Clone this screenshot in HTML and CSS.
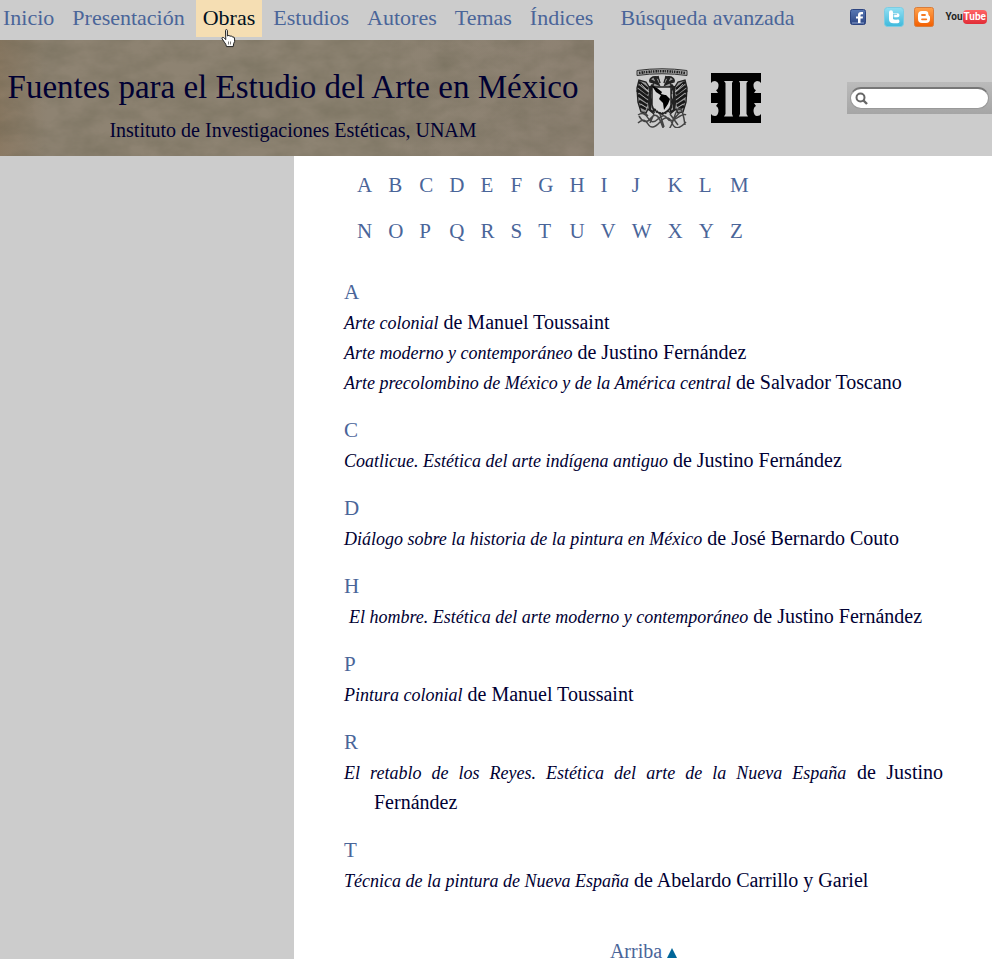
FILE: index.html
```html
<!DOCTYPE html>
<html lang="es">
<head>
<meta charset="utf-8">
<title>Fuentes para el Estudio del Arte en México</title>
<link rel="stylesheet" href="styles.css">
</head>
<body>
<header class="top">
  <div class="bar">
    <nav class="menu" aria-label="Principal">
      <a href="#">Inicio</a>
      <a href="#">Presentación</a>
      <a href="#" class="current">Obras<svg class="pointer" viewBox="0 0 15 19" aria-hidden="true"><path d="M4.5 1.5Q4.5 .6 5.4 .6T6.4 1.5V7Q8.2 5.6 9 7.2Q10.8 6.2 11.4 8Q13.6 7.3 13.6 10V12.5Q12.5 14 12.2 17.6H5.5Q5 15 3.4 13.2L1.2 10Q.4 8.8 1.4 8.4Q2.6 8 3.6 9.6L4.8 10.6Z" fill="#fff" stroke="#222" stroke-width="1"/><path d="M7.5 12.5V15.5M9.5 12.5V15.5" stroke="#555" stroke-width=".8"/></svg></a>
      <a href="#">Estudios</a>
      <a href="#">Autores</a>
      <a href="#">Temas</a>
      <a href="#">Índices</a>
      <a href="#" class="advanced">Búsqueda avanzada</a>
    </nav>
    <div class="social">
      <a href="#" aria-label="Facebook"><svg width="16" height="16" viewBox="0 0 16 16"><defs><linearGradient id="fb" x2="0" y2="1"><stop stop-color="#5878b4"/><stop offset="1" stop-color="#2c4582"/></linearGradient></defs><rect x=".5" y=".5" width="15" height="15" rx="2" fill="url(#fb)" stroke="#2c4480"/><rect x="2" y="13.5" width="12" height="1" fill="#8ba2d0"/><path d="M8 14V9.5H6V7.4H8V6Q8 3 11 3H13V5.2H11.6Q10.5 5.2 10.5 6.3V7.4H13L12.7 9.5H10.5V14Z" fill="#fff"/></svg></a>
      <a href="#" aria-label="Twitter"><svg width="20" height="20" viewBox="0 0 20 20"><defs><linearGradient id="tw" x2="0" y2="1"><stop stop-color="#93dff2"/><stop offset="1" stop-color="#3eb9dc"/></linearGradient></defs><rect x=".5" y=".5" width="19" height="19" rx="3" fill="url(#tw)" stroke="#7ccce2"/><path d="M7 5.2V12Q7 14.3 9.5 14.3H13.5M7 8.3H13.5" fill="none" stroke="#fff" stroke-width="4" stroke-linecap="round"/><path d="M9.7 7.3V11Q9.7 12.2 11 12.2H13.5M9 7.3H13" fill="none" stroke="#55bfe0" stroke-width="0.8"/></svg></a>
      <a href="#" aria-label="Blogger"><svg width="20" height="20" viewBox="0 0 20 20"><defs><linearGradient id="bl" x2="0" y2="1"><stop stop-color="#ffa24d"/><stop offset="1" stop-color="#f35e00"/></linearGradient></defs><rect x=".5" y=".5" width="19" height="19" rx="2" fill="url(#bl)" stroke="#d77c3c"/><path d="M8 4H11.5Q14.3 4 14.3 6.8Q14.3 8.5 15.2 8.7Q16 9 16 10V12Q16 16 12 16H8Q4 16 4 12V8Q4 4 8 4Z" fill="#fff"/><path d="M8 8H11M8 12.3H12.3" stroke="#f67a22" stroke-width="1.8" stroke-linecap="round"/></svg></a>
      <a href="#" class="youtube" aria-label="YouTube"><span>You</span><span class="tube">Tube</span></a>
    </div>
  </div>
  <div class="masthead">
    <div class="banner">
      <svg class="paper" aria-hidden="true"><filter id="grain" x="0" y="0" width="100%" height="100%" color-interpolation-filters="sRGB"><feTurbulence type="fractalNoise" baseFrequency=".03 .05" numOctaves="5" seed="8"/><feColorMatrix values="0 0 0 0 .35  0 0 0 0 .34  0 0 0 0 .26  .5 0 0 0 -.14"/></filter><rect width="100%" height="100%" filter="url(#grain)"/></svg>
      <h1>Fuentes para el Estudio del Arte en México</h1>
      <p>Instituto de Investigaciones Estéticas, UNAM</p>
    </div>
    <div class="logos">
      <a href="#" aria-label="UNAM"><svg width="52" height="60" viewBox="0 0 52 60">
        <path d="M1 7.500V2.500Q26 -1 51 2.500V7.500Q26 4 1 7.500Z" fill="#aaa" stroke="#333"/>
        <path d="M3 5Q26 1.500 49 5" fill="none" stroke="#222" stroke-width="2.600" stroke-dasharray="1.500 1 2 .7 1 .8"/>
        <g id="eagle"><path d="M24 15Q23 7 17 9Q13 11 14 14L18 15L15 20L19 25L15 33L18 44L14 42L12 32L15 22L10 14L3 12L1 20L2 34L5 44L10 45L12 41L18 46" fill="#999" stroke="#222" stroke-width="1.400"/>
        <path d="M3 14L12 21M2 18L12 26M1 22L12 30M2 27L12 34M3 33L11 38M4 38L10 41" stroke="#181818" stroke-width="2.800"/><path d="M15 17L19 20L17 25L22 28M15 33L19 35L17 39L21 42M14 12L22 16L19 10L23 9M14 18L14 42" fill="none" stroke="#222" stroke-width="2.500"/>
        <path d="M5 16L13 24M3 25L12 32M5 36L11 40" stroke="#ccc" stroke-width=".7"/></g>
        <use href="#eagle" transform="matrix(-1 0 0 1 52 0)"/>
        <path d="M16 19H35V37Q34 43 26 46Q17 43 16 37Z" fill="#d4d4d4" stroke="#222" stroke-width="1.500"/>
        <path d="M16 18L21 20L26 24L25 26L29 27L30 29L26 28L20 24ZM25 27L30 27L34 31L32 36L28 42L27 35L23 31Z" fill="#000"/>
        <path d="M18 41Q26 50 34 41" fill="none" stroke="#222" stroke-width="2.400" stroke-dasharray="2 1"/>
        <path d="M2 47Q8 43 12 50T22 51T31 50T41 50T50 47M2 55Q8 49 12 56T24 54T36 55T50 54M3 48Q9 58 15 50T26 57T38 50T49 57M8 44L12 48M44 44L38 51M24 46L28 59M18 46L14 55M34 46L42 57" fill="none" stroke="#444" stroke-width="1.500"/>
      </svg></a>
      <a href="#" aria-label="Instituto de Investigaciones Estéticas"><svg width="50" height="50" viewBox="0 0 50 50"><rect width="50" height="50" fill="#000"/><path d="M13 8H22L21 10V41L22 43.500H13L14.500 41V10ZM28 8H37L35.500 10V41L37 43.500H28L29 41V10ZM0 10Q1 8 4 8Q8 9 7.500 13Q7 17 5 17L7 20H0ZM0 30H7L5 33Q7.500 34 7.500 38Q7 43 4 43Q1 43 0 41ZM50 10Q49 8 46 8Q42 9 42.500 13Q43 17 45 17L43 20H50ZM50 30H43L45 33Q42.500 34 42.500 38Q43 43 46 43Q49 43 50 41Z" fill="#ccc"/></svg></a>
    </div>
    <form class="search">
      <svg width="14" height="14" viewBox="0 0 14 14" aria-hidden="true"><circle cx="5.500" cy="5.500" r="4" fill="none" stroke="#666" stroke-width="2"/><path d="M8.500 8.500L12 12" stroke="#666" stroke-width="2.400"/></svg>
      <input type="text" aria-label="Buscar">
    </form>
  </div>
</header>
<main class="content">
  <table class="letters">
    <tr><td><a href="#a">A</a></td><td><a href="#b">B</a></td><td><a href="#c">C</a></td><td><a href="#d">D</a></td><td><a href="#e">E</a></td><td><a href="#f">F</a></td><td><a href="#g">G</a></td><td><a href="#h">H</a></td><td><a href="#i">I</a></td><td><a href="#j">J</a></td><td><a href="#k">K</a></td><td><a href="#l">L</a></td><td><a href="#m">M</a></td></tr>
    <tr><td><a href="#n">N</a></td><td><a href="#o">O</a></td><td><a href="#p">P</a></td><td><a href="#q">Q</a></td><td><a href="#r">R</a></td><td><a href="#s">S</a></td><td><a href="#t">T</a></td><td><a href="#u">U</a></td><td><a href="#v">V</a></td><td><a href="#w">W</a></td><td><a href="#x">X</a></td><td><a href="#y">Y</a></td><td><a href="#z">Z</a></td></tr>
  </table>
  <section id="a"><h2>A</h2>
    <p><a href="#"><i>Arte colonial</i> de Manuel Toussaint</a></p>
    <p><a href="#"><i>Arte moderno y contemporáneo</i> de Justino Fernández</a></p>
    <p><a href="#"><i>Arte precolombino de México y de la América central</i> de Salvador Toscano</a></p>
  </section>
  <section id="c"><h2>C</h2>
    <p><a href="#"><i>Coatlicue. Estética del arte indígena antiguo</i> de Justino Fernández</a></p>
  </section>
  <section id="d"><h2>D</h2>
    <p><a href="#"><i>Diálogo sobre la historia de la pintura en México</i> de José Bernardo Couto</a></p>
  </section>
  <section id="h"><h2>H</h2>
    <p>&nbsp;<a href="#"><i>El hombre. Estética del arte moderno y contemporáneo</i> de Justino Fernández</a></p>
  </section>
  <section id="p"><h2>P</h2>
    <p><a href="#"><i>Pintura colonial</i> de Manuel Toussaint</a></p>
  </section>
  <section id="r"><h2>R</h2>
    <p><a href="#"><i>El retablo de los Reyes. Estética del arte de la Nueva España</i> de Justino Fernández</a></p>
  </section>
  <section id="t"><h2>T</h2>
    <p><a href="#"><i>Técnica de la pintura de Nueva España</i> de Abelardo Carrillo y Gariel</a></p>
  </section>
  <a class="to-top" href="#">Arriba <svg width="10" height="10" viewBox="0 0 10 10" aria-hidden="true"><path d="M5 0L10 10H0Z" fill="#069"/></svg></a>
</main>
</body>
</html>
```
FILE: styles.css
```css
* { box-sizing: border-box; }
body {
  margin: 0;
  min-height: 100vh;
  display: flex;
  flex-direction: column;
  background: #ccc;
  color: #003;
  font-family: "Liberation Serif", serif;
  font-size: 20px;
  line-height: 30px;
}
a { color: inherit; text-decoration: none; }
h1, h2, p { margin: 0; font-weight: normal; }
.bar { display: flex; justify-content: space-between; height: 40px; }
.menu { display: flex; gap: 4px; margin-left: -4px; color: #4a6599; font-size: 22px; white-space: nowrap; }
.menu a { position: relative; height: 37px; padding: 0 7px; line-height: 36px; }
.menu .current { background: #f5deb3; color: #012; }
.menu .advanced { margin-left: 9px; }
.pointer { position: absolute; left: 25px; top: 29px; width: 15px; height: 19px; z-index: 2; }
.social { display: flex; align-items: center; height: 34px; padding-right: 5px; }
.social svg { display: block; }
.social a + a { margin-left: 18px; }
.social a:nth-child(3) { margin-left: 10px; }
.social .youtube { display: flex; align-items: center; margin-left: 11px; font: bold 10px/14px Roboto, sans-serif; color: #222; }
.youtube .tube { padding: 0 1px; background: linear-gradient(#f66, #e12b35); color: #fff; border-radius: 4px; }
.masthead { display: flex; height: 116px; }
.banner { position: relative; width: 594px; padding: 29px 8px 0 0; text-align: center; background: linear-gradient(90deg, #8a7963, #8e8372 8%, #8d8372 60%, #8e8273); }
.banner h1, .banner p { position: relative; white-space: nowrap; }
.banner h1 { font-size: 33px; line-height: 36px; }
.banner p { margin-top: 10px; }
.paper { position: absolute; left: 0; top: 0; width: 100%; height: 100%; }
.logos { display: flex; align-items: center; gap: 23px; margin-left: 42px; }
.logos svg { display: block; }
.search { display: flex; align-items: center; align-self: center; width: 145px; height: 32px; margin-left: auto; padding: 3px; background: linear-gradient(#bbb, #a5a5a5); position: relative; }
.search svg { position: absolute; left: 8px; top: 10px; }
.search input { width: 100%; height: 22px; padding: 0 10px 0 24px; border: 1px solid #999; border-top: 2px solid #777; border-radius: 11px; background: #fff; font: inherit; font-size: 14px; }
.content { flex: 1; margin-left: 294px; padding: 6px 49px 0 50px; background: #fff; }
.letters { margin: 0 0 23px 5px; border-spacing: 0; color: #4a6599; font-size: 21px; }
.letters td { height: 46px; padding: 0 8px; }
h2 { color: #4a6599; font-size: 21px; }
section { margin-bottom: 18px; }
section p { padding-left: 30px; text-indent: -30px; text-align: justify; }
section i { font-size: 18px; line-height: 1; }
.to-top { display: block; margin-top: 47px; line-height: 18px; text-align: center; color: #4a6599; }
```
